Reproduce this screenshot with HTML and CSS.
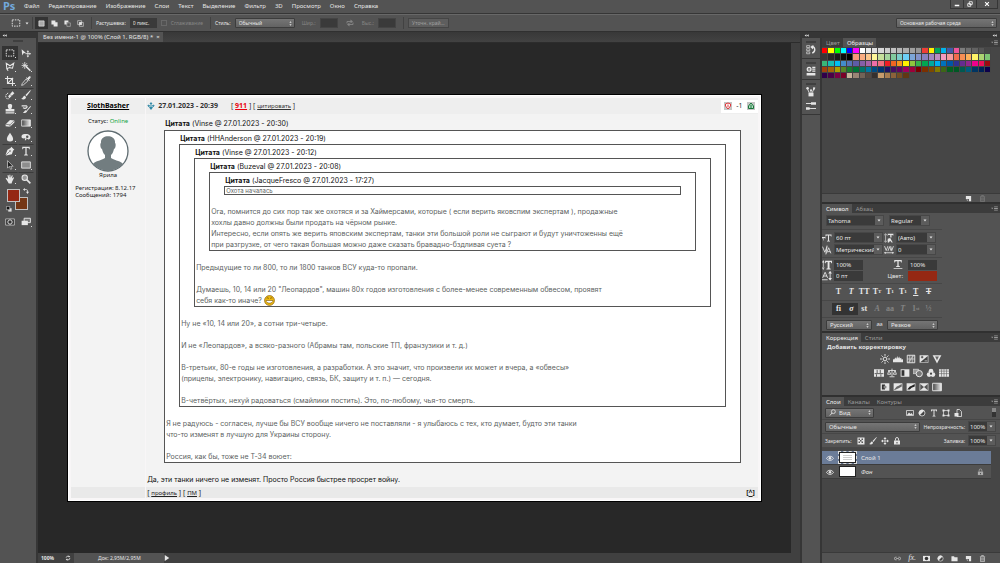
FILE: index.html
```html
<!DOCTYPE html>
<html lang="ru">
<head>
    <meta charset="UTF-8">
    <meta name="viewport" content="width=device-width, initial-scale=1.0">
    <title>Без имени-1</title>
    <link rel="stylesheet" href="styles.css">
</head>
<body>
    <svg class="sprite" aria-hidden="true">
        <symbol id="marquee" viewBox="0 0 16 16"><rect x="2" y="3" width="12" height="10" fill="none" stroke="currentColor" stroke-width="1.5" stroke-dasharray="2.5 1.6"/></symbol>
        <symbol id="move" viewBox="0 0 16 16"><path d="M1 2l7 6-4 .5L2 12z"/><path d="M11 5v8M7 9h8" stroke="currentColor" stroke-width="1.4"/><path d="M11 3.500l2 2.500H9zM11 15l2-2.500H9zM16 9l-2.500-2v4z"/></symbol>
        <symbol id="lasso" viewBox="0 0 16 16"><path d="M3 11L2 2l6 4 6-4-2 8-5-1-4 2 2 3" fill="none" stroke="currentColor" stroke-width="1.7"/></symbol>
        <symbol id="wand" viewBox="0 0 16 16"><path d="M8 7l7 7" stroke="currentColor" stroke-width="2.4"/><path d="M6 0v11M1 5.500h10M2.500 2l7 7M9.500 2l-7 7" stroke="currentColor" stroke-width="1.300"/></symbol>
        <symbol id="crop" viewBox="0 0 16 16"><path d="M4 0v12h12M0 4h12v12M5 11l8-8" fill="none" stroke="currentColor" stroke-width="1.8"/></symbol>
        <symbol id="dropper" viewBox="0 0 16 16"><path d="M8 5l3 3-7 6-3 1 1-3z" fill="none" stroke="currentColor" stroke-width="1.3"/><path d="M8 3l5 5 1-1-1.500-1.500C16 3 16 1 15 .7 13.500 0 12 1 10.500 3.500L9 2z"/></symbol>
        <symbol id="heal" viewBox="0 0 16 16"><path d="M5 10L12 2l3 3-8 8z"/><path d="M5 5c-4 1-5 6-2 9h4" fill="none" stroke="currentColor" stroke-width="1.500" stroke-dasharray="2 1"/><path d="M8 7l3 3" stroke="#535353"/></symbol>
        <symbol id="brush" viewBox="0 0 16 16"><path d="M15 0L7 8l2 2 6.500-9zM6 9c-3 0-2 4-6 5 4 2 8 1 8-3z"/></symbol>
        <symbol id="stamp" viewBox="0 0 16 16"><path d="M6 8C3 2 5 0 8 0s5 2 2 8h5v4H1V8zM1 13h14v2H1z"/></symbol>
        <symbol id="history" viewBox="0 0 16 16"><path d="M15 3l-6 7 1 1 6-7zM8 10c-3 0-2 3-5 4 3 1 6 0 7-3z"/><path d="M1 3h8c2 1 0 4-3 4l-3-1" fill="none" stroke="currentColor" stroke-width="1.700"/></symbol>
        <symbol id="eraser" viewBox="0 0 16 16"><path d="M1 10l7-7 7 1v3l-7 7-7-1z"/><path d="M1 10l7 1 7-7M8 11v3" stroke="#535353" fill="none"/></symbol>
        <symbol id="gradient" viewBox="0 0 16 16"><path d="M1 3h14v10H1z" fill="url(#fade)" stroke="currentColor" stroke-width="1.300"/></symbol>
        <linearGradient id="fade"><stop offset="0" stop-color="#444"/><stop offset="1" stop-color="#eee"/></linearGradient>
        <symbol id="drop" viewBox="0 0 16 16"><path d="M8 1c3 5 5 7 5 10a5 4 0 0 1-10 0c0-3 2-5 5-10z"/></symbol>
        <symbol id="dodge" viewBox="0 0 16 16"><path d="M8 3c5 0 8 3 7 6s-4 4-6 1l-1 3H6l1-3C2 11 0 9 1 6s4-3 7-3z"/><circle cx="10" cy="7.500" r="2" fill="#535353"/></symbol>
        <symbol id="pen" viewBox="0 0 16 16"><path d="M10 1l5 5-2 1-2 6-9 2-1-1 3-8 5-3z"/><path d="M2 14l5-5" stroke="#535353"/><circle cx="8" cy="8" r="1.300" fill="#535353"/></symbol>
        <symbol id="type" viewBox="0 0 16 16"><path d="M2 1h12v4h-1l-1-2H9v10l2 1v1H5v-1l2-1V3H4L3 5H2z"/></symbol>
        <symbol id="arrow" viewBox="0 0 16 16"><path d="M4 1v12l3-3 2 5 2-1-2-4h4z" fill="#222" stroke="currentColor"/></symbol>
        <symbol id="rect" viewBox="0 0 16 16"><path d="M1 3h14v10H1z" fill="#8d8d8d" stroke="currentColor" stroke-width="1.400"/></symbol>
        <symbol id="hand" viewBox="0 0 16 16"><path d="M3 10L1 7l1-1 3 2-1-6 1.500-.5L7 6V1h1.500L9 6l2-4 1.500.5L11 7l2.500-2 1 1-3 6-1 3H6z"/></symbol>
        <symbol id="zoom" viewBox="0 0 16 16"><circle cx="6" cy="6" r="4.300" fill="#999" stroke="currentColor" stroke-width="1.700"/><path d="M9 9l6 6" stroke="currentColor" stroke-width="2.600"/></symbol>
        <symbol id="swap" viewBox="0 0 16 16"><path d="M4 4h5q3 0 3 4v3" fill="none" stroke="currentColor" stroke-width="2"/><path d="M5 0v8L0 4zM8 10h8l-4 6z"/></symbol>
        <symbol id="exchange" viewBox="0 0 16 16"><path d="M2 9V5h8M14 7v4H6" fill="none" stroke="currentColor" stroke-width="1.800"/><path d="M9 1v8l5-4zM7 7v8l-5-4z"/></symbol>
        <symbol id="defaults" viewBox="0 0 16 16"><path d="M6 6h9v9H6z" fill="#ddd"/><path d="M1 1h9v9H1z" fill="#111" stroke="#ddd" stroke-width="1.500"/></symbol>
        <symbol id="mask" viewBox="0 0 16 16"><path d="M0 2h16v12H0z"/><circle cx="8" cy="8" r="4" fill="#333"/></symbol>
        <symbol id="quickmask" viewBox="0 0 16 16"><path d="M1 3h14v10H1z" fill="#333" stroke="currentColor"/><circle cx="8" cy="8" r="3.500" fill="none" stroke="currentColor" stroke-width="1.500"/></symbol>
        <symbol id="screen" viewBox="0 0 16 16"><path d="M5 2h10v7H5z" fill="#777" stroke="currentColor" stroke-width="1.500"/><path d="M1 6h10v7H1z"/></symbol>
        <symbol id="sel-new" viewBox="0 0 16 16"><path d="M2 2h12v12H2z" fill="#aaa" stroke="currentColor" stroke-width="1.500"/></symbol>
        <symbol id="sel-add" viewBox="0 0 16 16"><path d="M1 1h9v4h5v10H6v-5H1z"/></symbol>
        <symbol id="sel-sub" viewBox="0 0 16 16"><path d="M1 1h9v4H6v5H1z"/><path d="M6.500 6.500h8v8h-8z" fill="none" stroke="currentColor"/></symbol>
        <symbol id="sel-int" viewBox="0 0 16 16"><path d="M1.500 1.500h9v9h-9zM5.500 5.500h9v9h-9z" fill="none" stroke="currentColor" stroke-width="1.300"/><path d="M5 5h6v6H5z"/></symbol>
        <symbol id="updown" viewBox="0 0 8 16"><path d="M4 2l3 4H1zM4 14l3-4H1z"/></symbol>
        <symbol id="down" viewBox="0 0 8 8"><path d="M1 2h6L4 6z"/></symbol>
        <symbol id="collapse" viewBox="0 0 16 8"><path d="M8 0v8L2 4zM15 0v8L9 4z"/></symbol>
        <symbol id="panelmenu" viewBox="0 0 16 12"><path d="M0 4h5L2.500 8zM7 1h9v2H7zM7 5h9v2H7zM7 9h9v2H7z"/></symbol>
        <symbol id="histpanel" viewBox="0 0 16 16"><path d="M1 1h5v3H1zM1 6h5v3H1zM1 11h5v3H1z" fill="none" stroke="currentColor"/><path d="M9 2c6 1 7 8 1 11" fill="none" stroke="currentColor" stroke-width="2.200"/><path d="M12 0L7 3l4 4z"/></symbol>
        <symbol id="props" viewBox="0 0 16 16"><path d="M1 11h14v4H1zM10 1h5v2h-5zM10 4h5v2h-5zM10 7h5v2h-5z"/><circle cx="5" cy="5" r="3" fill="none" stroke="currentColor" stroke-width="2"/><path d="M3 5h5" stroke="currentColor"/></symbol>
        <symbol id="brushes" viewBox="0 0 16 16"><path d="M4 9h8v6H4z"/><path d="M5 9L2 2M8 9V5M10 9l3-7" stroke="currentColor" stroke-width="1.400"/><circle cx="2.500" cy="2" r="2"/><circle cx="8" cy="5" r="1.600"/><path d="M11 4l1-4 3 1-2 4z"/></symbol>
        <symbol id="presets" viewBox="0 0 16 16"><path d="M0 4h9M7 12h9" stroke="currentColor" stroke-width="1.500"/><path d="M8 2h8v4H8zM0 10l5 0 3 2-3 2H0z"/></symbol>
        <symbol id="newitem" viewBox="0 0 16 16"><path d="M2 2h12v12H9V9H2z"/><path d="M2 10l5 4v-4z" fill="#aaa"/></symbol>
        <symbol id="trash" viewBox="0 0 16 16"><path d="M2 4h12M6 3V1h4v2M3.500 5v10h9V5M6.500 6v7M9.500 6v7" fill="none" stroke="currentColor" stroke-width="1.400"/></symbol>
        <symbol id="ts" viewBox="0 0 20 16"><path d="M7 1h12v4h-1l-1-2h-3v10l2 1v1h-6v-1l2-1V3H9L8 5H7zM0 6h7v3H6L5 8H4v5H3V8H2L1 9H0z"/></symbol>
        <symbol id="leading" viewBox="0 0 16 16"><path d="M6 1h9v3h-1l-.5-1H12v4h-2V3H7L6 4zM6 9l4-1 4 7h-2l-1-2H9l-1 2H6z"/><path d="M2.500 2v12M0 4l2.500-3L5 4M0 12l2.500 3L5 12" fill="none" stroke="currentColor"/></symbol>
        <symbol id="kerning" viewBox="0 0 18 16"><path d="M1 2l4 10 4-10M8 14l4-10 4 10M10 11h5M9 0L7 16" fill="none" stroke="currentColor" stroke-width="1.500"/></symbol>
        <symbol id="tracking" viewBox="0 0 18 16"><path d="M1 1l3 8 3-8M7 10l3-8 3 8M12 1l2 8 3-8M1 13h16" fill="none" stroke="currentColor" stroke-width="1.500"/><path d="M3 11v4l-3-2zM15 11v4l3-2z"/></symbol>
        <symbol id="vscale" viewBox="0 0 16 16"><path d="M5 1h11v4h-1l-1-2h-2v10l2 1v1H7v-1l2-1V3H7L6 5H5zM1.500 3h1v10h-1zM2 0l2 4H0zM2 16l2-4H0z"/></symbol>
        <symbol id="hscale" viewBox="0 0 16 16"><path d="M2 0h12v4h-1l-1-2H9v7l2 1v1H5v-1l2-1V2H4L3 4H2zM1 13h14v1.500H1z"/></symbol>
        <symbol id="baseline" viewBox="0 0 16 16"><path d="M1 11l4-9 4 9M2 8h6M0 14h9M13 1v13" fill="none" stroke="currentColor" stroke-width="1.400"/><path d="M13 0l3 4h-6zM13 15l3-4h-6z"/></symbol>
        <symbol id="bright" viewBox="0 0 16 16"><circle cx="8" cy="8" r="3" fill="none" stroke="currentColor" stroke-width="1.600"/><path d="M8 0v3M8 13v3M0 8h3M13 8h3M2.500 2.500l2 2M11.500 11.500l2 2M13.500 2.500l-2 2M4.500 11.500l-2 2" stroke="currentColor" stroke-width="1.500"/></symbol>
        <symbol id="levels" viewBox="0 0 16 16"><path d="M0 13V9l2-2v2l2-4 1 3 2-5 1 4 2-3 1 3 2-1 1 3 2-1v5z"/></symbol>
        <symbol id="curves" viewBox="0 0 16 16"><path d="M2 2h12v12H2z" fill="#666" stroke="currentColor" stroke-width="1.500"/><path d="M2 14C9 12 7 4 14 2M6 2v12M10 2v12M2 8h12" fill="none" stroke="currentColor"/></symbol>
        <symbol id="exposure" viewBox="0 0 16 16"><path d="M1 2h14v12H1z"/><path d="M2 13L14 3v10z" fill="#444"/><path d="M3 5h4M5 3v4" stroke="#333" stroke-width="1.300"/><path d="M9 11h4" stroke="#eee"/></symbol>
        <symbol id="vibrance" viewBox="0 0 16 16"><path d="M1 2h14L8 15z"/><path d="M5 4h6l-3 6z" fill="#666"/></symbol>
        <symbol id="huesat" viewBox="0 0 16 16"><path d="M0 2h16v12H0z"/><path d="M1 9h14M5 3v5M10 3v5M4 10v4M11 10v4" stroke="#555" stroke-width="1.500"/></symbol>
        <symbol id="balance" viewBox="0 0 16 16"><path d="M8 1v12M4 14h8M2 4h12M3 4l-2 6h5L3 4M13 4l-3 6h5z" fill="none" stroke="currentColor" stroke-width="1.400"/></symbol>
        <symbol id="bw" viewBox="0 0 16 16"><path d="M1 2h14v12H1z"/><path d="M2.500 3.500H7v9H2.500z" fill="#333"/></symbol>
        <symbol id="photo" viewBox="0 0 16 16"><path d="M0 2h9v7H0z" fill="#999" stroke="currentColor"/><circle cx="10" cy="9" r="5" fill="#777" stroke="currentColor" stroke-width="1.600"/></symbol>
        <symbol id="mixer" viewBox="0 0 16 16"><circle cx="8" cy="5" r="3.800"/><circle cx="5" cy="10.500" r="3.800"/><circle cx="11" cy="10.500" r="3.800"/><circle cx="8" cy="9" r="1.800" fill="#444"/></symbol>
        <symbol id="lookup" viewBox="0 0 16 16"><path d="M0 2h16v12H0z"/><path d="M4 2v12M8 2v12M12 2v12M0 5h16M0 9h16" stroke="#666"/></symbol>
        <symbol id="invert" viewBox="0 0 16 16"><path d="M1 2h14v12H1z"/><path d="M3 4h5v8H3z" fill="#333"/><circle cx="8" cy="8" r="2.500" fill="#888"/></symbol>
        <symbol id="poster" viewBox="0 0 16 16"><path d="M1 2h14v12H1z"/><path d="M2 12l4-5 3-1 5-3v4l-5 3-7 3z" fill="#666"/></symbol>
        <symbol id="threshold" viewBox="0 0 16 16"><path d="M1 2h14v12H1z"/><path d="M2 12l4-5 3-1 5-3v4l-5 2-3 3z" fill="#222"/></symbol>
        <symbol id="selective" viewBox="0 0 16 16"><path d="M1 2h14v12H1z"/><path d="M2 3l6 5-6 5zM14 3L8 8l6 5z" fill="#555"/></symbol>
        <symbol id="gradmap" viewBox="0 0 16 16"><path d="M1 2h14v12H1z" fill="url(#fade)" stroke="currentColor" stroke-width="1.500"/></symbol>
        <symbol id="image" viewBox="0 0 16 16"><path d="M1 3h14v10H1z" fill="none" stroke="currentColor" stroke-width="1.500"/><path d="M2 12l4-5 3 3 2-2 3 4z"/></symbol>
        <symbol id="half" viewBox="0 0 16 16"><circle cx="8" cy="8" r="6" fill="#444" stroke="currentColor" stroke-width="1.500"/><path d="M12.500 3.500A6 6 0 0 0 3.500 12.500z"/></symbol>
        <symbol id="shape" viewBox="0 0 16 16"><path d="M3 3h10v10H3z" fill="none" stroke="currentColor" stroke-width="1.400"/><path d="M1 1h4v4H1zM11 1h4v4h-4zM1 11h4v4H1zM11 11h4v4h-4z"/></symbol>
        <symbol id="smart" viewBox="0 0 16 16"><path d="M6 1h5l4 4v10H6z" fill="none" stroke="currentColor" stroke-width="1.600"/><path d="M1 8h8v7H1z"/></symbol>
        <symbol id="checker" viewBox="0 0 16 16"><path d="M1 1h14v14H1z"/><path d="M3 3h3v3H3zM9 3h3v3H9zM6 6h3v3H6zM3 9h3v3H3zM9 9h3v3H9z" fill="#555"/></symbol>
        <symbol id="cross" viewBox="0 0 16 16"><path d="M8 2v12M2 8h12" stroke="currentColor" stroke-width="1.500"/><path d="M8 0l3 4H5zM8 16l3-4H5zM0 8l4-3v6zM16 8l-4-3v6z"/></symbol>
        <symbol id="lock" viewBox="0 0 16 16"><path d="M2 7h12v8H2z"/><path d="M5 7V4a3 3 0 0 1 6 0v3" fill="none" stroke="currentColor" stroke-width="1.800"/><path d="M7 10h2v3H7z" fill="#444"/></symbol>
        <symbol id="eye" viewBox="0 0 16 16"><path d="M1 9c3-6 11-6 14 0-4 5-10 5-14 0z" fill="none" stroke="currentColor" stroke-width="1.800"/><circle cx="8" cy="8.500" r="2.600"/></symbol>
        <symbol id="link" viewBox="0 0 16 16"><path d="M6 5H4a3 3 0 0 0 0 6h2M10 5h2a3 3 0 0 1 0 6h-2M5 8h6" fill="none" stroke="currentColor" stroke-width="1.400"/></symbol>
        <symbol id="folder" viewBox="0 0 16 16"><path d="M1 3h6l1 2h7v9H1z"/></symbol>
        <symbol id="search" viewBox="0 0 16 16"><circle cx="10" cy="6" r="4.500" fill="none" stroke="currentColor" stroke-width="1.800"/><path d="M7 9l-5 6" stroke="currentColor" stroke-width="2"/></symbol>
        <symbol id="refresh" viewBox="0 0 16 16"><circle cx="8" cy="8" r="5" fill="none" stroke="currentColor" stroke-width="2" stroke-dasharray="11 4"/><path d="M10 1l4 4-5 1zM6 15l-4-4 5-1z"/></symbol>
        <symbol id="play" viewBox="0 0 8 8"><path d="M1 0l6 4-6 4z"/></symbol>
        <symbol id="min" viewBox="0 0 16 16"><path d="M2 10h12v4H2z"/></symbol>
        <symbol id="restore" viewBox="0 0 16 16"><path d="M6 2h8v7H6zM2 7h8v7H2z" fill="#444" stroke="currentColor" stroke-width="2.200"/></symbol>
        <symbol id="close" viewBox="0 0 16 16"><path d="M3 3l10 10M13 3L3 13" stroke="currentColor" stroke-width="3"/></symbol>
        <symbol id="avatar" viewBox="0 0 42 42"><circle cx="21" cy="21" r="20" fill="#fff" stroke="#5e6b70" stroke-width="1.300"/><path d="M14 13c-1-9 15-9 14 0 1 0 1 5-1 6-1 4-2 5-3 6v3c5 3 10 3 12 6a20 20 0 0 1-30 0c2-3 7-3 12-6v-3c-1-1-2-2-3-6-2-1-2-6-1-6z" fill="#727d80"/></symbol>
        <symbol id="target" viewBox="0 0 16 16"><path d="M8 0l3 4H5zM8 16l3-4H5z"/><path d="M2 6c0 7 12 7 12 0M8 4v8M2 6l4 2M14 6l-4 2" fill="none" stroke="currentColor" stroke-width="2"/></symbol>
        <symbol id="votedown" viewBox="0 0 16 16"><path d="M0 0h16v16H0z" fill="#c5c5c5"/><path d="M3 4l5-2 5 2v4l-5 6-5-6z" fill="#fff" stroke="#e2363b" stroke-width="2"/><path d="M8 5v5" stroke="#e2363b" stroke-width="2"/></symbol>
        <symbol id="voteup" viewBox="0 0 16 16"><path d="M0 0h16v16H0z" fill="#c5c5c5"/><path d="M8 2l5 6v5H3V8z" fill="#b6dfc4" stroke="#19743a" stroke-width="2"/><path d="M8 6v6" stroke="#19743a" stroke-width="2"/></symbol>
        <symbol id="grin" viewBox="0 0 16 16"><circle cx="8" cy="8" r="7.200" fill="#edba14" stroke="#8a5d0a"/><path d="M4 5q1.500-2 3 0M9 5q1.500-2 3 0" fill="none" stroke="#5c3d00"/><path d="M3 8h10c0 5-10 5-10 0z" fill="#fff" stroke="#6a4500" stroke-width=".8"/></symbol>
    </svg>

    <header class="menubar">
        <span class="logo">Ps</span>
        <nav class="menu">
            <a href="#">Файл</a>
            <a href="#">Редактирование</a>
            <a href="#">Изображение</a>
            <a href="#">Слои</a>
            <a href="#">Текст</a>
            <a href="#">Выделение</a>
            <a href="#">Фильтр</a>
            <a href="#">3D</a>
            <a href="#">Просмотр</a>
            <a href="#">Окно</a>
            <a href="#">Справка</a>
        </nav>
        <div class="window-buttons">
            <button aria-label="Свернуть"><svg><use href="#min"/></svg></button>
            <button aria-label="Восстановить"><svg><use href="#restore"/></svg></button>
            <button class="wide" aria-label="Закрыть"><svg><use href="#close"/></svg></button>
        </div>
    </header>

    <div class="options">
        <div class="group current-tool">
            <svg><use href="#marquee"/></svg>
            <svg class="tiny"><use href="#down"/></svg>
        </div>
        <div class="group modes">
            <button class="active" aria-label="Новая область"><svg><use href="#sel-new"/></svg></button>
            <button aria-label="Добавить к области"><svg><use href="#sel-add"/></svg></button>
            <button aria-label="Вычесть из области"><svg><use href="#sel-sub"/></svg></button>
            <button aria-label="Пересечение"><svg><use href="#sel-int"/></svg></button>
        </div>
        <div class="group">
            <label for="feather">Растушевка:</label>
            <input class="feather" id="feather" type="text" value="0 пикс.">
            <label class="check off"><input type="checkbox" disabled> Сглаживание</label>
        </div>
        <div class="group">
            <label for="style">Стиль:</label>
            <span class="select style-select"><select id="style"><option>Обычный</option></select><svg><use href="#updown"/></svg></span>
            <label class="off gap" for="w">Шир.:</label>
            <input class="size" id="w" type="text" disabled>
            <svg class="exchange off"><use href="#exchange"/></svg>
            <label class="off" for="h">Выс.:</label>
            <input class="size" id="h" type="text" disabled>
        </div>
        <button class="refine" disabled>Уточн. край...</button>
        <span class="select workspace-select"><select aria-label="Рабочая среда"><option>Основная рабочая среда</option></select><svg><use href="#updown"/></svg></span>
    </div>

    <div class="workspace">
        <aside class="tools">
            <div class="strip"><svg><use href="#collapse"/></svg></div>
            <div class="grip"></div>
            <div class="tool-grid">
                <button class="active" aria-label="Прямоугольная область"><svg><use href="#marquee"/></svg></button>
                <button class="plain" aria-label="Перемещение"><svg><use href="#move"/></svg></button>
                <button aria-label="Лассо"><svg><use href="#lasso"/></svg></button>
                <button aria-label="Волшебная палочка"><svg><use href="#wand"/></svg></button>
                <button aria-label="Рамка"><svg><use href="#crop"/></svg></button>
                <button aria-label="Пипетка"><svg><use href="#dropper"/></svg></button>
                <button class="sep" aria-label="Восстанавливающая кисть"><svg><use href="#heal"/></svg></button>
                <button class="sep" aria-label="Кисть"><svg><use href="#brush"/></svg></button>
                <button aria-label="Штамп"><svg><use href="#stamp"/></svg></button>
                <button aria-label="Архивная кисть"><svg><use href="#history"/></svg></button>
                <button aria-label="Ластик"><svg><use href="#eraser"/></svg></button>
                <button aria-label="Градиент"><svg><use href="#gradient"/></svg></button>
                <button aria-label="Размытие"><svg><use href="#drop"/></svg></button>
                <button aria-label="Осветлитель"><svg><use href="#dodge"/></svg></button>
                <button class="sep" aria-label="Перо"><svg><use href="#pen"/></svg></button>
                <button class="sep" aria-label="Текст"><svg><use href="#type"/></svg></button>
                <button aria-label="Выделение контура"><svg><use href="#arrow"/></svg></button>
                <button aria-label="Прямоугольник"><svg><use href="#rect"/></svg></button>
                <button class="sep" aria-label="Рука"><svg><use href="#hand"/></svg></button>
                <button class="sep plain" aria-label="Масштаб"><svg><use href="#zoom"/></svg></button>
            </div>
            <div class="colors">
                <button class="bg" aria-label="Цвет фона"></button>
                <button class="fg" aria-label="Основной цвет"></button>
                <svg class="swap"><use href="#swap"/></svg>
                <svg class="defaults"><use href="#defaults"/></svg>
            </div>
            <div class="tool-grid">
                <button class="plain" aria-label="Быстрая маска"><svg><use href="#quickmask"/></svg></button>
                <button aria-label="Режим экрана"><svg><use href="#screen"/></svg></button>
            </div>
        </aside>

        <section class="document">
            <div class="doc-tabs">
                <div class="doc-tab"><span>Без имени-1 @ 100% (Слой 1, RGB/8) *</span><button aria-label="Закрыть вкладку">×</button></div>
            </div>
            <div class="view">
                <main class="canvas">
                    <article class="post">
                        <div class="author-head"><a href="#">SlothBasher</a></div>
                        <div class="post-head">
                            <svg><use href="#target"/></svg>
                            <b>27.01.2023 - 20:39</b>
                            <span class="post-links">[ <a class="num" href="#">911</a> ] [ <a href="#">цитировать</a> ]</span>
                            <span class="rating"><svg><use href="#votedown"/></svg>-1<svg><use href="#voteup"/></svg></span>
                        </div>
                        <div class="author">
                            <div>Статус: <span class="online">Online</span></div>
                            <svg><use href="#avatar"/></svg>
                            <div>Ярила</div>
                            <div class="stats">Регистрация: 8.12.17<br>Сообщений: 1794</div>
                        </div>
                        <div class="post-body">
                            <div class="quote">
                                <div class="quote-title"><b>Цитата</b> (Vinse @ 27.01.2023 - 20:30)</div>
                                <blockquote>
                                    <div class="quote">
                                        <div class="quote-title"><b>Цитата</b> (HHAnderson @ 27.01.2023 - 20:19)</div>
                                        <blockquote>
                                            <div class="quote">
                                                <div class="quote-title"><b>Цитата</b> (Vinse @ 27.01.2023 - 20:12)</div>
                                                <blockquote>
                                                    <div class="quote">
                                                        <div class="quote-title"><b>Цитата</b> (Buzeval @ 27.01.2023 - 20:08)</div>
                                                        <blockquote>
                                                            <div class="quote">
                                                                <div class="quote-title"><b>Цитата</b> (JacqueFresco @ 27.01.2023 - 17:27)</div>
                                                                <blockquote class="short">Охота началась</blockquote>
                                                            </div>
                                                            <p>Ога, помнится до сих пор так же охотяся и за Хаймерсами, которые ( если верить яковспим экспертам ), продажные<br>хохлы давно должны были продать на чёрном рынке.<br>Интересно, если опять же верить яповским экспертам, танки эти большой роли не сыграют и будут уничтоженны ещё<br>при разгрузке, от чего такая большая можно даже сказать бравадно-бздливая суета ?</p>
                                                        </blockquote>
                                                    </div>
                                                    <p>Предыдущие то ли 800, то ли 1800 танков ВСУ куда-то пропали.</p>
                                                    <p>Думаешь, 10, 14 или 20 "Леопардов", машин 80х годов изготовления с более-менее современным обвесом, проявят<br>себя как-то иначе? <svg class="smile"><use href="#grin"/></svg></p>
                                                </blockquote>
                                            </div>
                                            <p>Ну не «10, 14 или 20», а сотни три-четыре.</p>
                                            <p>И не «Леопардов», а всяко-разного (Абрамы там, польские ТП, франзузики и т. д.)</p>
                                            <p>В-третьих, 80-е годы не изготовления, а разработки. А это значит, что произвели их может и вчера, а «обвесы»<br>(прицелы, электронику, навигацию, связь, БК, защиту и т. п.) — сегодня.</p>
                                            <p>В-четвёртых, нехуй радоваться (смайлики постить). Это, по-любому, чья-то смерть.</p>
                                        </blockquote>
                                    </div>
                                    <p>Я не радуюсь - согласен, лучше бы ВСУ вообще ничего не поставляли - я улыбаюсь с тех, кто думает, будто эти танки<br>что-то изменят в лучшую для Украины сторону.</p>
                                    <p>Россия, как бы, тоже не Т-34 воюет:</p>
                                </blockquote>
                            </div>
                            <p class="answer">Да, эти танки ничего не изменят. Просто Россия быстрее просрет войну.</p>
                        </div>
                        <div class="author-foot"></div>
                        <div class="post-foot">
                            <span>[ <a href="#">профиль</a> ] [ <a href="#">ПМ</a> ]</span>
                            <b>[<a href="#">^</a>]</b>
                        </div>
                    </article>
                </main>
                <div class="scrollbar"></div>
            </div>
            <footer class="status">
                <span class="percent">100%</span>
                <svg><use href="#refresh"/></svg>
                <span class="doc-size">Док: 2,95M/2,95M</span>
                <svg class="tiny"><use href="#play"/></svg>
            </footer>
        </section>

        <aside class="icon-dock">
            <div class="strip"><svg><use href="#collapse"/></svg></div>
            <div class="dock-group"><div class="grip"></div><button aria-label="История"><svg><use href="#histpanel"/></svg></button></div>
            <div class="dock-group"><div class="grip"></div><button aria-label="Свойства"><svg><use href="#props"/></svg></button></div>
            <div class="dock-group"><div class="grip"></div><button aria-label="Кисть"><svg><use href="#brushes"/></svg></button><button aria-label="Наборы кистей"><svg><use href="#presets"/></svg></button></div>
        </aside>

        <aside class="panels">
            <div class="strip end"><svg><use href="#collapse"/></svg></div>
            <section class="panel">
                <div class="tabs"><button>Цвет</button><button class="active">Образцы</button><svg><use href="#panelmenu"/></svg></div>
                <div class="swatch-area"><div class="swatches" id="swatches"></div></div>
                <div class="panel-foot"><svg><use href="#newitem"/></svg><svg class="off"><use href="#trash"/></svg></div>
            </section>

            <section class="panel">
                <div class="tabs"><button class="active">Символ</button><button>Абзац</button><svg><use href="#panelmenu"/></svg></div>
                <div class="character">
                    <div class="char-row fonts">
                        <span class="combo"><select aria-label="Гарнитура"><option>Tahoma</option></select><svg><use href="#down"/></svg></span>
                        <span class="combo"><select aria-label="Начертание"><option>Regular</option></select><svg><use href="#down"/></svg></span>
                    </div>
                    <div class="char-row metrics">
                        <svg><use href="#ts"/></svg>
                        <span class="combo"><select aria-label="Кегль"><option>60 пт</option></select><svg><use href="#down"/></svg></span>
                        <svg><use href="#leading"/></svg>
                        <span class="combo"><select aria-label="Интерлиньяж"><option>(Авто)</option></select><svg><use href="#down"/></svg></span>
                        <svg><use href="#kerning"/></svg>
                        <span class="combo"><select aria-label="Кернинг"><option>Метрический</option></select><svg><use href="#down"/></svg></span>
                        <svg><use href="#tracking"/></svg>
                        <span class="combo"><select aria-label="Трекинг"><option>0</option></select><svg><use href="#down"/></svg></span>
                    </div>
                    <div class="char-row scales">
                        <svg><use href="#vscale"/></svg>
                        <input type="text" aria-label="Масштаб по вертикали" value="100%">
                        <svg><use href="#hscale"/></svg>
                        <input type="text" aria-label="Масштаб по горизонтали" value="100%">
                        <svg><use href="#baseline"/></svg>
                        <input type="text" aria-label="Смещение" value="0 пт">
                        <label for="text-color">Цвет:</label>
                        <button class="text-color" id="text-color"></button>
                    </div>
                    <div class="char-row faces">
                        <button><b>T</b></button><button><i>T</i></button><button>TT</button><button>T<small>T</small></button><button>T<sup>1</sup></button><button>T<sub>1</sub></button><button><u>T</u></button><button><s>T</s></button>
                    </div>
                    <div class="char-row faces">
                        <button class="active">fi</button><button class="active"><i>σ</i></button><button>st</button><button class="off"><i>A</i></button><button class="off">aa</button><button class="off"><i>T</i></button><button class="off">1<sup>st</sup></button><button class="off">½</button>
                    </div>
                    <div class="char-row languages">
                        <span class="select"><select aria-label="Язык"><option>Русский</option></select><svg><use href="#updown"/></svg></span>
                        <span class="aa">a<small>a</small></span>
                        <span class="select"><select aria-label="Сглаживание"><option>Резкое</option></select><svg><use href="#updown"/></svg></span>
                    </div>
                </div>
            </section>

            <section class="panel">
                <div class="tabs"><button class="active">Коррекция</button><button>Стили</button><svg><use href="#panelmenu"/></svg></div>
                <div class="adjust">
                    <b>Добавить корректировку</b>
                    <div class="adjust-row"><svg><use href="#bright"/></svg><svg><use href="#levels"/></svg><svg><use href="#curves"/></svg><svg><use href="#exposure"/></svg><svg><use href="#vibrance"/></svg></div>
                    <div class="adjust-row"><svg><use href="#huesat"/></svg><svg><use href="#balance"/></svg><svg><use href="#bw"/></svg><svg><use href="#photo"/></svg><svg><use href="#mixer"/></svg><svg><use href="#lookup"/></svg></div>
                    <div class="adjust-row"><svg><use href="#invert"/></svg><svg><use href="#poster"/></svg><svg><use href="#threshold"/></svg><svg><use href="#selective"/></svg><svg><use href="#gradmap"/></svg></div>
                </div>
            </section>

            <section class="panel layers">
                <div class="tabs"><button class="active">Слои</button><button>Каналы</button><button>Контуры</button><svg><use href="#panelmenu"/></svg></div>
                <div class="layer-row filter">
                    <span class="select kind"><svg class="lens"><use href="#search"/></svg><select aria-label="Фильтр слоев"><option>Вид</option></select><svg><use href="#updown"/></svg></span>
                    <span class="filter-icons"><svg><use href="#image"/></svg><svg><use href="#half"/></svg><svg><use href="#type"/></svg><svg><use href="#shape"/></svg><svg><use href="#smart"/></svg></span>
                    <span class="toggle"></span>
                </div>
                <div class="layer-row">
                    <span class="select blend"><select aria-label="Режим наложения"><option>Обычные</option></select><svg><use href="#updown"/></svg></span>
                    <label class="caption" for="opacity">Непрозрачность:</label>
                    <span class="combo percent-box"><input id="opacity" type="text" value="100%"><svg><use href="#down"/></svg></span>
                </div>
                <div class="layer-row">
                    <span class="caption">Закрепить:</span>
                    <span class="lock-icons"><svg><use href="#checker"/></svg><svg><use href="#brush"/></svg><svg><use href="#cross"/></svg><svg><use href="#lock"/></svg></span>
                    <label class="caption" for="fill">Заливка:</label>
                    <span class="combo percent-box"><input id="fill" type="text" value="100%"><svg><use href="#down"/></svg></span>
                </div>
                <div class="layer-list">
                    <div class="layer active"><svg><use href="#eye"/></svg><span class="thumb drawn"><i></i><i></i><i></i></span><span>Слой 1</span></div>
                    <div class="layer"><svg><use href="#eye"/></svg><span class="thumb"></span><em>Фон</em><svg class="layer-lock"><use href="#lock"/></svg></div>
                </div>
                <div class="panel-foot"><svg><use href="#link"/></svg><i class="fx">fx.</i><svg><use href="#mask"/></svg><svg><use href="#half"/></svg><svg><use href="#folder"/></svg><svg><use href="#newitem"/></svg><svg><use href="#trash"/></svg></div>
            </section>
        </aside>
    </div>

    <script>
        const rows = [
            'f00 ff0 0f0 0ff 00f f0f fff ebebeb e1e1e1 d7d7d7 ccc c2c2c2 b7b7b7 acacac a0a0a0 959595 ee3e36 fff200 00a55a 00b5ec 4358a7 f0559b 7d7d7d 707070 626262 555 464646',
            '363636 262626 1a1a1a 0c0c0c 000 f7977a fbad82 fdc68c fff799 c6df9c a4d49d 81ca9d 7bcdc9 6ccff7 7ca6d8 8293ca 8881be a286bd bc8cbf f49bc1 f5999d f16c4d f68e54 fbaf5a fff467 acd372 7dc473',
            '39b778 16bcb4 00bff3 438ccb 5573b7 5e5ca7 855fa8 a763a9 ef6ea8 f16d7e ee1d24 f16522 f7941d fff100 8fc63d 37b44a 00a650 00a99e 00aeef 0072bc 0054a5 2f3192 652c91 91278f ed008c ee105a 9d0a0f',
            'a1410d a36209 aba000 588528 197b30 007236 00736a 0076a4 004a80 003370 1d1363 450e61 62055f 9e005c 9d0039 790000 7b3000 7c4900 827a00 3e6617 045f20 005824 005951 005b7e 003562 002056 0c004b',
            '30004a 4b0048 7a0045 7a0026 c7b198 9a8575 726357 524842 35302e c69c6d a77c50 8c623a 744d23 603813'
        ];
        const box = document.getElementById('swatches');
        rows.join(' ').split(' ').forEach(color => {
            const cell = document.createElement('span');
            cell.style.backgroundColor = '#' + color;
            box.appendChild(cell);
        });
    </script>
</body>
</html>
```
FILE: styles.css
```css
* {
    box-sizing: border-box;
}

body {
    margin: 0;
    height: 100vh;
    display: flex;
    flex-direction: column;
    overflow: hidden;
    background-color: #535353;
    color: #e6e6e6;
    font-family: "Noto Sans", sans-serif;
    font-size: 6px;
    line-height: 8px;
}

svg {
    width: 10px;
    height: 10px;
    flex: none;
    fill: currentColor;
}

button, input, select {
    font: inherit;
    color: inherit;
    margin: 0;
    padding: 0;
    border: none;
    border-radius: 0;
    background: none;
}

button {
    display: flex;
    align-items: center;
    justify-content: center;
}

select {
    appearance: none;
    width: 100%;
    padding: 0 3px;
}

.sprite {
    position: absolute;
    width: 0;
    height: 0;
}

.tiny {
    width: 4px;
    height: 5px;
}

.off {
    color: #858585;
}

/* top bars */

.menubar {
    display: flex;
    height: 14px;
    border-bottom: 1px solid #363636;
}

.logo {
    width: 24px;
    padding-left: 3px;
    color: #72a9dc;
    font-size: 11px;
    font-weight: bold;
    line-height: 12px;
}

.menu {
    display: flex;
    gap: 9px;
    line-height: 13px;
}

.menu a {
    color: inherit;
    text-decoration: none;
}

.window-buttons {
    display: flex;
    align-self: flex-start;
    margin-left: auto;
    margin-right: 2px;
    border: 1px solid #363636;
    border-top: none;
    color: #fff;
}

.window-buttons button {
    width: 13px;
    height: 8px;
    border-right: 1px solid #363636;
}

.window-buttons .wide {
    width: 20px;
    border-right: none;
}

.window-buttons svg {
    width: 6px;
    height: 6px;
}

.options {
    display: flex;
    align-items: center;
    height: 18px;
    padding: 0 3px;
    border-top: 1px solid #686868;
    border-bottom: 1px solid #303030;
    font-size: 5px;
}

.group {
    display: flex;
    align-items: center;
    gap: 4px;
    height: 12px;
    padding-right: 7px;
    margin-right: 4px;
    border-right: 1px solid #424242;
}

.current-tool {
    padding-left: 8px;
    padding-right: 3px;
    margin-right: 2px;
}

.modes {
    gap: 0;
    padding-right: 4px;
}

.modes button {
    width: 13px;
    height: 12px;
}

.modes svg {
    width: 7px;
    height: 7px;
}

.active {
    background-color: #333;
}

.options input[type="text"] {
    height: 10px;
    padding: 0 3px;
    background-color: #3a3a3a;
}

.options .feather {
    width: 27px;
}

.options .size {
    width: 18px;
    background-color: #4c4c4c;
    border: 1px solid #444;
}

.options .gap {
    margin-left: 3px;
}

.check {
    display: flex;
    align-items: center;
    gap: 4px;
}

.check input {
    appearance: none;
    width: 6px;
    height: 6px;
    border: 1px solid #686868;
}

.exchange {
    width: 8px;
    margin: 0 4px;
}

.select {
    position: relative;
    display: flex;
    align-items: center;
    height: 10px;
    border: 1px solid #3c3c3c;
    border-radius: 1px;
    background: linear-gradient(#757575, #636363);
}

.select svg {
    position: absolute;
    right: 2px;
    width: 3px;
    height: 7px;
    pointer-events: none;
}

.style-select {
    width: 60px;
}

.refine {
    width: 41px;
    height: 10px;
    border: 1px solid #454545;
    background-color: #5e5e5e;
    color: #a0a0a0;
}

.workspace-select {
    width: 101px;
    margin-left: auto;
}

/* left tools */

.workspace {
    flex: 1;
    display: flex;
    min-height: 0;
}

.strip {
    display: flex;
    align-items: center;
    height: 6px;
    padding-left: 2px;
    background-color: #363636;
}

.strip svg {
    width: 5px;
    height: 3px;
}

.strip.end {
    justify-content: flex-end;
    padding-right: 3px;
}

.grip {
    width: 10px;
    height: 2px;
    margin: 2px auto;
    background-color: #3f3f3f;
}

.tools {
    width: 38px;
    border-right: 2px solid #363636;
}

.tool-grid {
    display: grid;
    grid-template-columns: 1fr 1fr;
    margin: 0 2px;
    padding-top: 2px;
}

.tool-grid button {
    position: relative;
    height: 14px;
    border: 1px solid transparent;
}

.tool-grid button::after {
    content: "";
    position: absolute;
    right: 1px;
    bottom: 1px;
    width: 1px;
    height: 1px;
    background-color: #ddd;
}

.tool-grid .plain::after {
    display: none;
}

.tool-grid .sep {
    border-top-color: #3c3c3c;
}

.colors {
    position: relative;
    height: 27px;
}

.colors .fg, .colors .bg {
    position: absolute;
    width: 13px;
    height: 13px;
    border: 1px solid #c0c0c0;
}

.fg {
    left: 7px;
    top: 3px;
    background-color: #952813;
}

.bg {
    left: 15px;
    top: 11px;
    background-color: #753715;
}

.swap, .defaults {
    position: absolute;
    width: 6px;
    height: 6px;
}

.swap {
    left: 23px;
    top: 2px;
}

.defaults {
    left: 6px;
    top: 20px;
}

/* document window */

.document {
    flex: 1;
    min-width: 0;
    display: flex;
    flex-direction: column;
}

.doc-tabs {
    height: 11px;
    background: linear-gradient(#383838, #424242);
    border-bottom: 1px solid #2c2c2c;
}

.doc-tab {
    display: flex;
    align-items: center;
    gap: 3px;
    width: 125px;
    height: 10px;
    padding-left: 5px;
    background-color: #535353;
    white-space: nowrap;
}

.view {
    flex: 1;
    display: flex;
    min-height: 0;
}

.canvas {
    flex: 1;
    display: flex;
    align-items: center;
    justify-content: center;
    background-color: #282828;
}

.scrollbar {
    width: 9px;
    background-color: #404040;
}

.status {
    display: flex;
    align-items: center;
    height: 10px;
    background-color: #404040;
    font-size: 5px;
}

.status .percent {
    width: 27px;
    padding-left: 3px;
    font-weight: bold;
}

.status svg {
    width: 6px;
    height: 6px;
    margin-right: 3px;
}

.doc-size {
    width: 90px;
    height: 10px;
    padding: 1px 24px 0;
    background-color: #535353;
    white-space: nowrap;
}

/* forum post on the canvas */

.post {
    width: 92%;
    display: grid;
    grid-template-columns: 74px 1fr;
    column-gap: 1px;
    padding: 2px;
    border: 1px solid #fff;
    outline: 1px solid #000;
    background-color: #f8f6f7;
    color: #222;
    font-size: 7px;
    line-height: 11px;
}

.post a {
    color: inherit;
}

.author-head, .post-head {
    height: 16px;
    line-height: 16px;
    background-color: #eee;
}

.author-head {
    text-align: center;
    color: #000;
    font-weight: bold;
}

.post-head {
    display: flex;
    align-items: center;
    gap: 3px;
    padding-left: 1px;
    color: #333;
}

.post-head svg {
    width: 8px;
    height: 8px;
    color: #2b86a5;
}

.post-links {
    margin-left: 10px;
}

.post-links a, .post-foot span a {
    font-size: 6px;
}

.post .num {
    color: #e8000d;
    font-size: 7px;
    font-weight: bold;
}

.rating {
    display: flex;
    align-items: center;
    justify-content: space-between;
    width: 37px;
    height: 13px;
    margin-left: auto;
    padding: 0 3px;
    background-color: #fff;
}

.author {
    padding-top: 2px;
    background-color: #f3f3f3;
    font-size: 6px;
    line-height: 7px;
    text-align: center;
}

.author svg {
    display: block;
    width: 42px;
    height: 42px;
    margin: 5px auto 0;
}

.author > div:first-child {
    padding-top: 2px;
}

.online {
    color: #14a33e;
}

.stats {
    padding: 6px 4px;
    text-align: left;
}

.post-body {
    padding: 2px 17px 2px 1px;
    background-color: #f3f3f3;
    font-family: Inter, sans-serif;
}

.quote {
    margin: 0 0 11px 14px;
    color: #111;
}

.quote .quote {
    margin-right: 14px;
}

.post-body > .quote {
    margin-left: 17px;
}

.quote-title {
    padding: 2px 0 0 1px;
    white-space: nowrap;
}

.post-body > .quote > .quote-title {
    padding-bottom: 1px;
}

blockquote {
    margin: 0;
    border: 1px solid #555;
    background-color: #fff;
    color: #5c5f61;
}

blockquote p {
    margin: 11px 1px 0;
    white-space: nowrap;
}

.quote + p {
    margin-top: 0;
}

.short {
    padding-left: 1px;
    font-size: 6px;
    line-height: 7px;
}

.smile {
    width: 11px;
    height: 11px;
    vertical-align: top;
}

.answer {
    margin: 0;
    color: #111;
}

.author-foot, .post-foot {
    height: 11px;
    background-color: #e9e9e9;
}

.post-foot {
    display: flex;
    justify-content: space-between;
    padding: 0 3px 0 1px;
}

/* right dock */

.icon-dock {
    width: 22px;
    border: solid #363636;
    border-width: 0 2px;
}

.dock-group {
    padding: 1px 0;
    border-bottom: 1px solid #363636;
}

.dock-group button {
    width: 100%;
    height: 14px;
}

.dock-group .grip {
    margin-bottom: 0;
}

.panels {
    width: 178px;
    display: flex;
    flex-direction: column;
    white-space: nowrap;
}

.panel {
    border-bottom: 2px solid #303030;
}

.tabs {
    display: flex;
    height: 9px;
    background-color: #3c3c3c;
    color: #999;
}

.tabs button {
    padding: 0 3px 0 4px;
}

.tabs .active {
    background-color: #535353;
    color: #eee;
}

.tabs svg {
    width: 7px;
    height: 5px;
    margin: 2px 2px 0 auto;
}

.swatch-area {
    height: 146px;
    padding-top: 1px;
    padding-right: 9px;
    background-color: #464646;
}

.swatches {
    display: grid;
    grid-template-columns: repeat(27, 1fr);
}

.swatches span {
    aspect-ratio: 1;
    border: solid #444;
    border-width: 0 1px 1px 0;
}

.panel-foot {
    display: flex;
    align-items: center;
    justify-content: flex-end;
    gap: 7px;
    height: 9px;
    padding-right: 14px;
    border-top: 1px solid #3a3a3a;
}

.panel-foot svg {
    width: 7px;
    height: 7px;
}

.character {
    padding-right: 58px;
}

.char-row {
    padding: 2px 0;
    border-bottom: 1px solid #474747;
}

.combo {
    display: flex;
    align-items: center;
    height: 11px;
    border: 1px solid #474747;
    background-color: #3a3a3a;
}

.combo svg {
    width: 8px;
    height: 9px;
    padding: 2px;
    background-color: #5c5c5c;
}

.combo select, .combo input {
    min-width: 0;
    flex: 1;
    padding: 0 0 0 1px;
}

.fonts {
    display: grid;
    grid-template-columns: 58px 41px;
    gap: 5px;
    padding: 2px 4px 3px;
}

.metrics {
    display: grid;
    grid-template-columns: 11px 49px 11px 40px;
    gap: 1px 1px;
    align-items: center;
}

.scales {
    display: grid;
    grid-template-columns: 11px 29px 1fr 29px;
    gap: 1px;
    align-items: center;
    padding-right: 5px;
}

.scales svg:nth-of-type(2), .scales label {
    justify-self: end;
    margin-right: 4px;
}

.scales input, .text-color {
    width: 100%;
    height: 10px;
    padding: 0 2px;
    background-color: #3a3a3a;
}

.text-color {
    background-color: #952813;
}

.faces {
    display: grid;
    grid-template-columns: repeat(8, 1fr);
    padding: 2px 7px 2px 10px;
    font-family: "Liberation Serif", serif;
    font-size: 8px;
    font-weight: bold;
}

.faces button {
    height: 12px;
}

.faces small, .faces sup, .faces sub {
    font-size: 5px;
}

.languages {
    display: grid;
    grid-template-columns: 46px 11px 51px;
    gap: 2px;
    padding: 2px 4px 1px;
    border-bottom: none;
}

.aa {
    text-align: center;
}

.adjust {
    padding: 1px 5px 2px;
}

.adjust-row {
    display: flex;
    justify-content: center;
    gap: 3px;
    padding-top: 1px;
    height: 14px;
    align-items: center;
}

.layers {
    flex: 1;
    display: flex;
    flex-direction: column;
    border-bottom: none;
}

.layer-row {
    display: flex;
    align-items: center;
    gap: 3px;
    height: 14px;
    padding: 0 4px 0 3px;
    border-bottom: 1px solid #474747;
}

.caption {
    font-size: 5px;
}

.kind {
    width: 49px;
}

.kind .lens {
    position: static;
    width: 7px;
    margin-left: 3px;
}

.filter-icons {
    display: flex;
    gap: 4px;
    margin-left: auto;
    margin-right: 27px;
}

.filter-icons svg, .lock-icons svg {
    width: 8px;
    height: 8px;
}

.toggle {
    width: 4px;
    height: 9px;
    border: solid #333;
    border-width: 0 0 5px;
    background-color: #888;
}

.blend {
    flex: 1;
}

.percent-box {
    width: 28px;
}

.lock-icons {
    display: flex;
    gap: 4px;
    margin-left: 2px;
    margin-right: auto;
}

.layer-list {
    flex: 1;
    padding-top: 3px;
    padding-right: 9px;
    background-color: #464646;
}

.layer {
    display: flex;
    align-items: center;
    gap: 5px;
    height: 14px;
    padding-left: 4px;
    border-bottom: 1px solid #3c3c3c;
    background-color: #535353;
}

.layer.active {
    background-color: #6b7c98;
}

.layer svg {
    width: 8px;
    height: 8px;
}

.thumb {
    width: 17px;
    height: 11px;
    border: 1px solid #222;
    background-color: #fff;
}

.drawn {
    display: flex;
    flex-direction: column;
    align-items: center;
    gap: 1px;
    padding: 2px;
    outline: 1px dashed #ddd;
}

.drawn i {
    width: 9px;
    height: 1px;
    background-color: #ccc;
}

.layer .layer-lock {
    margin-left: auto;
    margin-right: 7px;
    width: 7px;
    color: #aaa;
}

.layers .panel-foot {
    height: 11px;
}

.fx {
    font-family: "Liberation Serif", serif;
    font-size: 8px;
}
```
